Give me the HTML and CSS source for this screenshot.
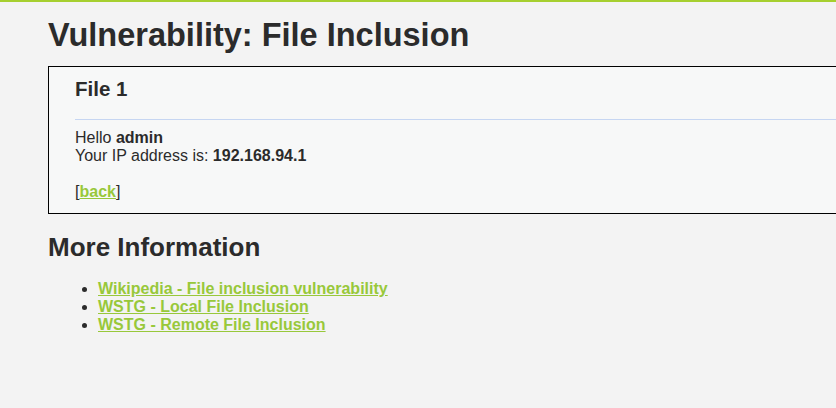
FILE: index.html
```html
<!DOCTYPE html>
<html>
<head>
<meta charset="utf-8">
<link rel="stylesheet" href="styles.css">
</head>
<body>
<div class="page">
  <div class="body_padded">
    <h1>Vulnerability: File Inclusion</h1>
    <div class="vulnerable_code_area">
      <h3>File 1</h3>
      <hr class="rule">
      <p class="msg">Hello <b>admin</b><br>Your IP address is: <b>192.168.94.1</b></p>
      <p class="msg">[<a href="#">back</a>]</p>
    </div>
    <h2>More Information</h2>
    <ul class="links">
      <li><a href="#">Wikipedia - File inclusion vulnerability</a></li>
      <li><a href="#">WSTG - Local File Inclusion</a></li>
      <li><a href="#">WSTG - Remote File Inclusion</a></li>
    </ul>
  </div>
</div>
</body>
</html>
```
FILE: styles.css
```css
html, body {
  margin: 0;
  padding: 0;
  background: #f3f3f3;
  overflow: hidden;
}
body {
  font-family: "Liberation Sans", Arial, sans-serif;
  font-size: 16px;
  color: #2b2b2b;
}
.page {
  border-top: 2px solid #a6cf2f;
  height: 406px;
  overflow: hidden;
}
.body_padded {
  padding: 0 0 0 48px;
}
h1 {
  margin: 14px 0 0 0;
  font-size: 32.5px;
  line-height: 38px;
  font-weight: bold;
}
.vulnerable_code_area {
  margin-top: 12px;
  width: 900px;
  background: #f7f8f8;
  border: 1px solid #000;
  padding: 8px 0 12px 26px;
}
h3 {
  margin: 0;
  font-size: 20.5px;
  line-height: 28px;
  padding-bottom: 16px;
}
.rule {
  border: 0;
  border-top: 1px solid #c6d6f2;
  margin: 0 0 9px 0;
}
.msg {
  margin: 0 0 18px 0;
  line-height: 18px;
}
.msg:last-child {
  margin-bottom: 0;
}
a {
  color: #98c83a;
  font-weight: bold;
  text-decoration: underline;
}
h2 {
  margin: 17px 0 0 0;
  font-size: 26px;
  line-height: 32px;
}
.links {
  margin: 17px 0 0 0;
  padding-left: 50px;
  line-height: 18px;
}
```
